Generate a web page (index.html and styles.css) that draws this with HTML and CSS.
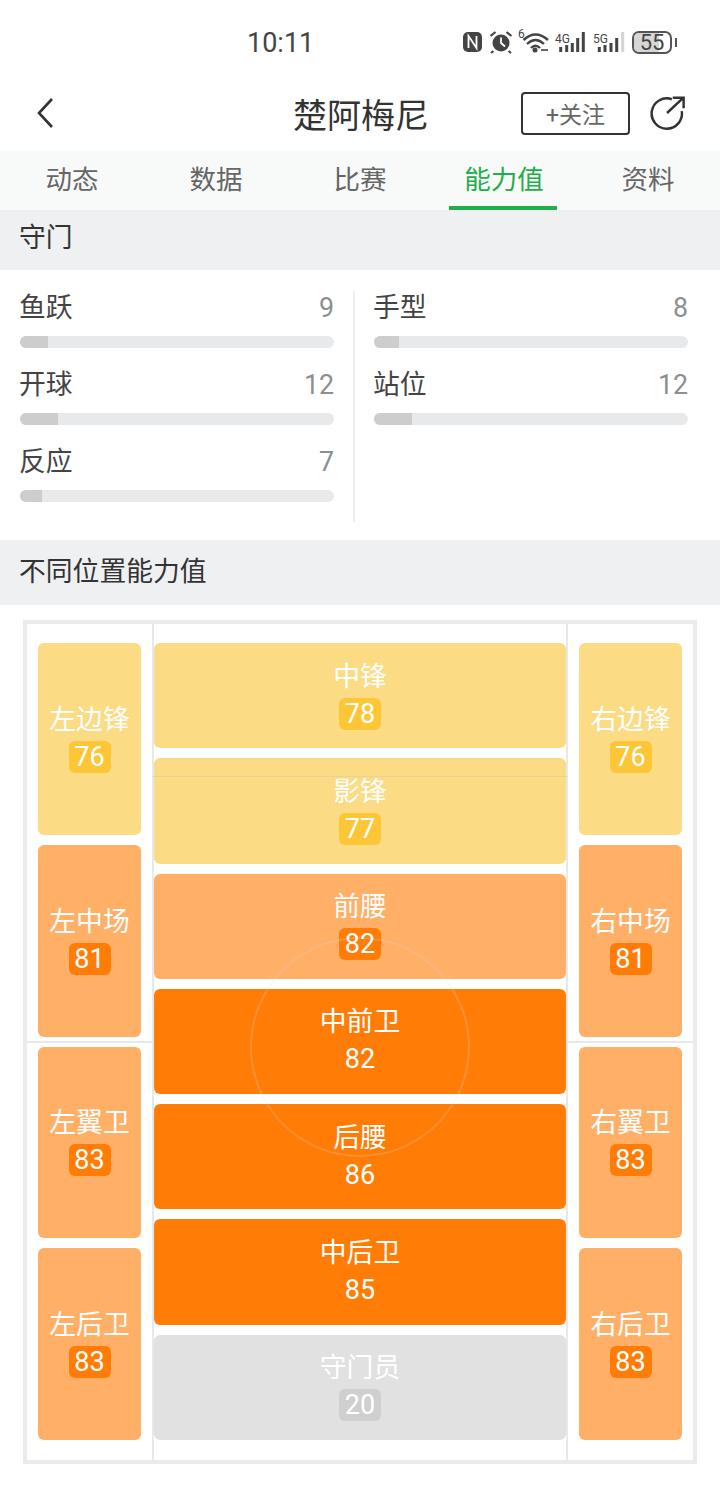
FILE: index.html
```html
<!DOCTYPE html>
<html lang="zh">

<head>
    <meta charset="UTF-8">
    <title>楚阿梅尼</title>
    <link rel="stylesheet" href="styles.css">
</head>

<body>
    <div class="statusbar">
        <span class="time">10:11</span>
        <svg class="status_icons" width="172" height="40" viewBox="0 0 172 40">
            <!-- nfc -->
            <rect x="3" y="9" width="19" height="20" rx="5" fill="#444"/>
            <path d="M8.500 25V13l8 12V13" fill="none" stroke="#fff" stroke-width="1.800"/>
            <!-- alarm -->
            <circle cx="41" cy="20" r="8.500" fill="#444"/>
            <path d="M41 14.500V20l4 3.500" fill="none" stroke="#fff" stroke-width="1.800"/>
            <path d="M30.500 13l5-4M51.500 13l-5-4M33.500 28l-2.500 2M48.500 28l2.500 2" stroke="#444" stroke-width="2.200" fill="none"/>
            <!-- wifi -->
            <text x="58" y="15" class="tiny">6</text>
            <path d="M63.500 17Q75.500 6 88 17M67 21Q75.500 13 84 21M71 25Q75.500 20.500 80 25" fill="none" stroke="#444" stroke-width="2.400"/>
            <circle cx="75" cy="27" r="2.500" fill="#444"/>
            <path d="M81 27h7" stroke="#444" stroke-width="1.600"/>
            <!-- sim 1 -->
            <text x="95" y="20" class="tiny">4G</text>
            <path d="M100.700 24v5M106.700 22v7M112.300 20v9M117.700 15v14M123.300 9v20" stroke="#444" stroke-width="3"/>
            <!-- sim 2 -->
            <text x="133" y="20" class="tiny">5G</text>
            <path d="M139.300 24v5M145 22v7M151 20v9M156.700 15v14" stroke="#444" stroke-width="3"/>
            <path d="M162.700 9v20" stroke="#d4d4d4" stroke-width="3"/>
        </svg>
        <div class="battery"><span class="battery_fill"></span><span class="battery_num">55</span></div>
        <span class="battery_tip"></span>
    </div>

    <header class="topbar">
        <svg class="back" width="18" height="32" viewBox="0 0 18 32">
            <path d="M16 2L3 16l13 14" fill="none" stroke="#333" stroke-width="2.600"/>
        </svg>
        <h1>楚阿梅尼</h1>
        <div class="topbar_right">
            <button class="follow">+关注</button>
            <svg class="share" width="38" height="38" viewBox="0 0 38 38">
                <path d="M23 4.500A16 16 0 1 0 33.500 17" fill="none" stroke="#333" stroke-width="2.600"/>
                <path d="M18 19L35 3M24 3h11.500v11" fill="none" stroke="#333" stroke-width="2.600"/>
            </svg>
        </div>
    </header>

    <nav class="tabs">
        <a>动态</a>
        <a>数据</a>
        <a>比赛</a>
        <a class="valgt">能力值</a>
        <a>资料</a>
    </nav>

    <h2 class="section first">守门</h2>
    <section class="attrs">
        <div class="attr_col">
            <div class="attr"><div class="attr_top"><span>鱼跃</span><b>9</b></div><div class="bar"><i style="width:9%"></i></div></div>
            <div class="attr"><div class="attr_top"><span>开球</span><b>12</b></div><div class="bar"><i style="width:12%"></i></div></div>
            <div class="attr"><div class="attr_top"><span>反应</span><b>7</b></div><div class="bar"><i style="width:7%"></i></div></div>
        </div>
        <div class="attr_col right">
            <div class="attr"><div class="attr_top"><span>手型</span><b>8</b></div><div class="bar"><i style="width:8%"></i></div></div>
            <div class="attr"><div class="attr_top"><span>站位</span><b>12</b></div><div class="bar"><i style="width:12%"></i></div></div>
        </div>
    </section>

    <h2 class="section">不同位置能力值</h2>
    <section class="pitch">
        <span class="line mid"></span>
        <span class="line v_left"></span>
        <span class="line v_right"></span>
        <div class="pos_col">
            <div class="pos yellow"><p>左边锋</p><span>76</span></div>
            <div class="pos light"><p>左中场</p><span>81</span></div>
            <div class="pos light"><p>左翼卫</p><span>83</span></div>
            <div class="pos light"><p>左后卫</p><span>83</span></div>
        </div>
        <div class="pos_col">
            <div class="pos yellow"><p>中锋</p><span>78</span></div>
            <div class="pos yellow"><p>影锋</p><span>77</span></div>
            <div class="pos light"><p>前腰</p><span>82</span></div>
            <div class="pos strong"><p>中前卫</p><span>82</span></div>
            <div class="pos strong"><p>后腰</p><span>86</span></div>
            <div class="pos strong"><p>中后卫</p><span>85</span></div>
            <div class="pos grey"><p>守门员</p><span>20</span></div>
        </div>
        <div class="pos_col">
            <div class="pos yellow"><p>右边锋</p><span>76</span></div>
            <div class="pos light"><p>右中场</p><span>81</span></div>
            <div class="pos light"><p>右翼卫</p><span>83</span></div>
            <div class="pos light"><p>右后卫</p><span>83</span></div>
        </div>
        <span class="line box_top"></span>
        <span class="circle"></span>
    </section>
</body>

</html>
```

FILE: styles.css
```css
* {
    box-sizing: border-box;
}

body {
    margin: 0;
    background: white;
    font-family: Roboto, "Noto Sans CJK SC", sans-serif;
    color: #333;
}

.statusbar {
    display: flex;
    align-items: center;
    height: 75px;
    padding: 10px 43px 0 247px;
}

.time {
    font-size: 27px;
    color: #444;
}

.status_icons {
    margin-left: auto;
    margin-top: 1px;
}

.tiny {
    font-family: Roboto, sans-serif;
    font-size: 12px;
    fill: #444;
}

.battery {
    position: relative;
    width: 40px;
    height: 23px;
    border: 2px solid #555;
    border-radius: 7px;
    overflow: hidden;
    text-align: center;
}

.battery_fill {
    position: absolute;
    left: 0;
    top: 0;
    bottom: 0;
    width: 70%;
    background: #d6d6d6;
}

.battery_num {
    position: relative;
    display: block;
    font-size: 22px;
    line-height: 19px;
    color: #444;
}

.battery_tip {
    width: 2px;
    height: 9px;
    margin-left: 3px;
    background: #555;
}

.topbar {
    display: grid;
    grid-template-columns: 1fr auto 1fr;
    align-items: center;
    height: 76px;
    padding: 0 34px 0 36px;
}

.topbar h1 {
    margin: 0;
    font-size: 34px;
    font-weight: 400;
    color: #333;
}

.topbar_right {
    display: flex;
    align-items: center;
    justify-content: flex-end;
    gap: 19px;
    margin-left: -20px;
}

.follow {
    width: 109px;
    height: 43px;
    padding: 0;
    background: white;
    border: 2px solid #333;
    border-radius: 4px;
    font-family: inherit;
    font-size: 23px;
    color: #666;
}

.share {
    width: 36px;
    margin-left: 1px;
}

.tabs {
    display: grid;
    grid-template-columns: repeat(5, 144px);
    height: 61px;
    background: #f8f9f9;
    border-bottom: 2px solid #eee;
}

.tabs a {
    text-align: center;
    font-size: 26.500px;
    line-height: 58px;
    color: #666;
}

.tabs .valgt {
    position: relative;
    color: #1fae4b;
}

.tabs .valgt::after {
    content: "";
    position: absolute;
    left: 17px;
    right: 19px;
    bottom: 0;
    height: 4px;
    background: #1fae4b;
}

.section {
    margin: 0;
    height: 65px;
    padding-left: 19px;
    background: #eff0f2;
    font-size: 26.800px;
    font-weight: 400;
    line-height: 64px;
    color: #333;
}

.section.first {
    height: 58px;
    line-height: 53px;
}

.attrs {
    display: grid;
    grid-template-columns: 335px 1fr;
    height: 270px;
    padding: 21px 32px 19px 20px;
}

.attr_col {
    padding-right: 19px;
    border-right: 2px solid #eee;
}

.attr_col.right {
    padding: 0 0 0 19px;
    border: 0;
}

.attr {
    height: 77px;
}

.attr_top {
    display: flex;
    justify-content: space-between;
    height: 45px;
    font-size: 26.800px;
    line-height: 34px;
    color: #444;
}

.attr_top span {
    margin-left: -1px;
}

.attr_top b {
    font-weight: 400;
    color: #8a8f92;
}

.bar {
    height: 12px;
    background: #e8e9ea;
    border-radius: 6px;
    overflow: hidden;
}

.bar i {
    display: block;
    height: 100%;
    background: #cdcdcd;
}

.pitch {
    position: relative;
    display: grid;
    grid-template-columns: 103px 412px 103px;
    gap: 13px;
    height: 844px;
    margin: 15px 23px 0;
    padding: 19px 11px 20px;
    border: 4px solid #ebebeb;
}

.pos_col {
    position: relative;
    display: flex;
    flex-direction: column;
    gap: 10px;
}

.pos {
    flex: 1;
    display: flex;
    flex-direction: column;
    align-items: center;
    justify-content: center;
    padding-bottom: 1px;
    border-radius: 6px;
    color: white;
}

.pos p {
    margin: 0 0 5px;
    font-size: 26.800px;
    line-height: 32px;
}

.pos span {
    width: 42px;
    height: 32px;
    border-radius: 6px;
    font-size: 27px;
    line-height: 32px;
    text-align: center;
}

.yellow {
    background: #fbdb84;
}

.yellow span {
    background: #fdc637;
}

.light {
    background: #ffaf66;
}

.light span {
    background: #ff7d06;
}

.strong {
    background: #ff7d06;
}

.grey {
    background: #e1e1e1;
}

.grey span {
    background: #cfcfcf;
}

.line {
    position: absolute;
    background: #e6e8ec;
}

.mid {
    left: 0;
    right: 0;
    top: 417px;
    height: 2px;
}

.v_left {
    left: 125px;
    top: 0;
    bottom: 0;
    width: 2px;
}

.v_right {
    left: 539px;
    top: 0;
    bottom: 0;
    width: 2px;
}

.box_top {
    left: 125px;
    width: 416px;
    top: 152px;
    height: 1px;
    background: rgba(200, 195, 180, 0.35);
}

.circle {
    position: absolute;
    left: 223px;
    top: 313px;
    width: 220px;
    height: 220px;
    border: 2px solid rgba(225, 228, 232, 0.18);
    border-radius: 50%;
}
```
